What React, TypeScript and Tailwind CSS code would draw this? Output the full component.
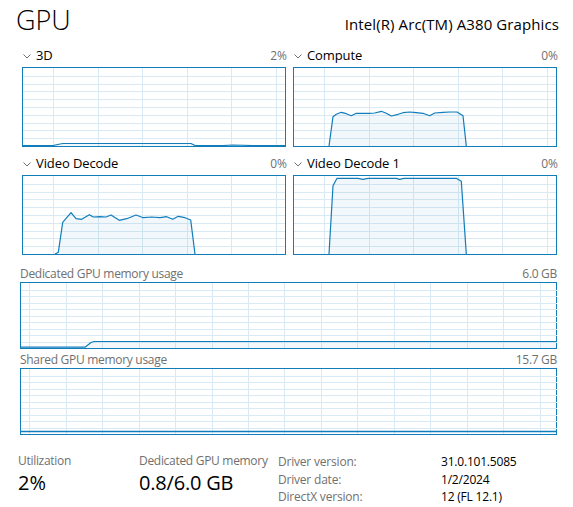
import React from "react";

type Pt = [number, number];

const BLUE = "#117dbb";
const GRID = "#d9eaf4";

function Chevron() {
  return (
    <svg width="8" height="5" viewBox="0 0 8 5" className="shrink-0">
      <path d="M0.5 0.5 L4 4 L7.5 0.5" fill="none" stroke="#707070" strokeWidth="1" />
    </svg>
  );
}

interface GraphProps {
  w: number;
  h: number;
  colStart: number;
  colStep: number;
  rows: number;
  points?: Pt[];
  baseline?: number;
}

function Graph({ w, h, colStart, colStep, rows, points, baseline }: GraphProps) {
  const cols: number[] = [];
  for (let x = colStart; x < w; x += colStep) cols.push(x);
  const hLines: number[] = [];
  for (let i = 1; i < rows; i++) hLines.push(Math.round((i * h) / rows) + 0.5);

  const line = points ? points.map((p) => `${p[0]},${p[1]}`).join(" ") : "";
  const area = points
    ? `${points[0][0]},${h} ${line} ${points[points.length - 1][0]},${h}`
    : "";

  return (
    <div className="border border-[#117dbb] bg-white">
      <svg width={w} height={h} className="block">
        {hLines.map((y) => (
          <line key={`h${y}`} x1={0} x2={w} y1={y} y2={y} stroke={GRID} strokeWidth={1} />
        ))}
        {cols.map((x) => (
          <line
            key={`v${x}`}
            x1={Math.round(x) + 0.5}
            x2={Math.round(x) + 0.5}
            y1={0}
            y2={h}
            stroke={GRID}
            strokeWidth={1}
          />
        ))}
        {points && (
          <>
            <polygon points={area} fill={BLUE} fillOpacity={0.06} />
            <polyline points={line} fill="none" stroke={BLUE} strokeWidth={1.2} strokeLinejoin="round" />
          </>
        )}
        {baseline !== undefined && (
          <line x1={0} x2={w} y1={baseline} y2={baseline} stroke={BLUE} strokeWidth={1.5} />
        )}
      </svg>
    </div>
  );
}

function Panel({ label, value, points }: { label: string; value: string; points: Pt[] }) {
  return (
    <div className="w-[264px]">
      <div className="flex items-center h-[23px] text-[13px]">
        <span className="ml-[1px] mr-[5px] mt-[1px]">
          <Chevron />
        </span>
        <span className="text-black flex-1 tracking-[-0.1px]">{label}</span>
        <span className="text-[12px] text-[#707070] mr-[-1px]">{value}</span>
      </div>
      <Graph w={262} h={78} colStart={30} colStep={44.6} rows={10} points={points} />
    </div>
  );
}

const threeD: Pt[] = [
  [0, 77.5], [30, 77.5], [37, 76], [40, 75.5], [168, 75.5], [172, 77.5], [200, 77.5], [210, 77], [230, 77.5], [262, 77.5],
];

const compute: Pt[] = [
  [35, 78], [39, 48.7], [42.3, 46.3], [47.3, 44.3], [52.3, 45.7], [57.3, 47.7], [62.3, 45.3], [69, 45.3], [75, 45.3],
  [80.7, 45], [87.3, 43.3], [92.3, 45.3], [97.3, 48], [104, 46.3], [109, 44.7], [115.7, 44], [122.3, 44.7], [129, 45.3],
  [135.7, 47.7], [140.7, 45], [149, 44.3], [155.7, 44], [163, 44], [169, 47.7], [172.3, 78],
];

const decode: Pt[] = [
  [32, 78], [35.3, 76.3], [39.7, 46.3], [48, 36.7], [53, 42.7], [58.7, 43.3], [66.3, 38.7], [70.3, 41], [77, 40.7],
  [83, 41], [88, 39], [96.3, 44.3], [103.7, 42.7], [113, 39], [120.3, 41.7], [128.7, 41], [137, 41.7], [143.7, 40.7],
  [149.7, 43.3], [155.3, 40.3], [162, 41.7], [167.7, 44], [172, 78],
];

const decode1: Pt[] = [
  [35, 78], [39, 9.7], [43, 2.3], [64, 2.3], [69, 3.3], [74, 2.3], [102.3, 2.3], [105.7, 3.3], [109.7, 2.3],
  [162.3, 2.3], [167.3, 5.3], [172.3, 78],
];

const dedicated: Pt[] = [
  [0, 64.2], [64, 64.2], [70, 59.5], [73, 58.5], [536, 58.5],
];

function MemHeader({ label, value }: { label: string; value: string }) {
  return (
    <div className="flex items-center justify-between text-[12px] leading-[16px] tracking-[-0.3px] text-[#707070]">
      <span>{label}</span>
      <span>{value}</span>
    </div>
  );
}

export default function App() {
  return (
    <div className="w-[573px] h-[507px] bg-white overflow-hidden font-['Open_Sans',sans-serif] text-black">
      <div className="flex items-end justify-between pl-[16px] pr-[14px] h-[40px]">
        <span className="text-[27px] leading-[40px] font-light">GPU</span>
        <span className="text-[15px] leading-[20px] mb-[6px] tracking-[0.1px]">Intel(R) Arc(TM) A380 Graphics</span>
      </div>

      <div className="pl-[22px] flex gap-[7px] mt-[4px]">
        <Panel label="3D" value="2%" points={threeD} />
        <Panel label="Compute" value="0%" points={compute} />
      </div>
      <div className="pl-[22px] flex gap-[7px] mt-[5px]">
        <Panel label="Video Decode" value="0%" points={decode} />
        <Panel label="Video Decode 1" value="0%" points={decode1} />
      </div>

      <div className="pl-[20px] pr-[16px] mt-[11px]">
        <MemHeader label="Dedicated GPU memory usage" value="6.0 GB" />
        <Graph w={536} h={65} colStart={8.3} colStep={36.45} rows={10} points={dedicated} />
        <div className="mt-[3px]">
          <MemHeader label="Shared GPU memory usage" value="15.7 GB" />
        </div>
        <Graph w={536} h={65} colStart={8.3} colStep={36.45} rows={10} baseline={62.5} />
      </div>

      <div className="flex pl-[18px] mt-[18px]">
        <div className="w-[121px]">
          <div className="text-[12px] text-[#707070] leading-[16px] tracking-[-0.3px]">Utilization</div>
          <div className="text-[20px] leading-[28px]">2%</div>
        </div>
        <div className="w-[139px]">
          <div className="text-[12px] text-[#707070] leading-[16px] tracking-[-0.3px]">Dedicated GPU memory</div>
          <div className="text-[20px] leading-[28px] tracking-[-0.2px]">0.8/6.0 GB</div>
        </div>
        <div className="grid grid-cols-[163px_1fr] text-[12px] leading-[17.5px] tracking-[-0.2px]">
          <span className="text-[#707070]">Driver version:</span>
          <span>31.0.101.5085</span>
          <span className="text-[#707070]">Driver date:</span>
          <span>1/2/2024</span>
          <span className="text-[#707070]">DirectX version:</span>
          <span>12 (FL 12.1)</span>
        </div>
      </div>
    </div>
  );
}
